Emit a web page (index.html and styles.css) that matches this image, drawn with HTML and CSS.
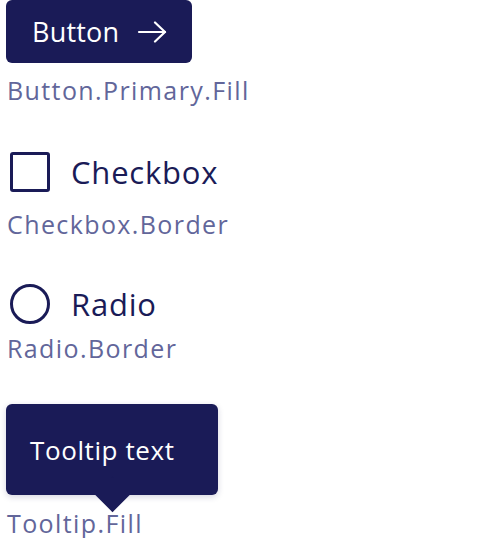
FILE: index.html
```html
<!DOCTYPE html>
<html lang="en">
<head>
  <meta charset="UTF-8">
  <meta name="viewport" content="width=device-width, initial-scale=1.0">
  <title>Tokens</title>
  <link rel="stylesheet" href="styles.css">
</head>
<body>
  <!-- primary button -->
  <div class="sample">
    <button class="btn">
      Button
      <svg class="btn-arrow" width="30" height="22" viewBox="0 0 30 22" fill="none" stroke="#fff" stroke-width="2.2" stroke-linecap="round" stroke-linejoin="round">
        <path d="M2 11H28"/>
        <path d="M18 1.5L28 11L18 20.5"/>
      </svg>
    </button>
    <div class="token">Button.Primary.Fill</div>
  </div>

  <!-- checkbox -->
  <div class="sample">
    <label class="choice">
      <span class="box"></span>
      Checkbox
    </label>
    <div class="token">Checkbox.Border</div>
  </div>

  <!-- radio -->
  <div class="sample">
    <label class="choice">
      <span class="box round"></span>
      Radio
    </label>
    <div class="token">Radio.Border</div>
  </div>

  <!-- tooltip -->
  <div class="sample">
    <div class="tooltip">Tooltip text</div>
    <div class="token">Tooltip.Fill</div>
  </div>
</body>
</html>
```

FILE: styles.css
```css
body {
  margin: 0;
  padding: 0 6px;
  font-family: 'Open Sans', 'Lato', sans-serif;
  background: #fff;
  color: #1a1b57;
}

.sample {
  display: flex;
  flex-direction: column;
  align-items: flex-start;
}

.token {
  font-size: 25px;
  letter-spacing: 1.4px;
  color: #62669a;
  padding-left: 1px;
  line-height: 30px;
}

/* 按钮 */
.btn {
  display: flex;
  align-items: center;
  gap: 18px;
  width: 186px;
  height: 63px;
  padding: 0 0 0 26px;
  background: #1a1b57;
  color: #fff;
  border: none;
  border-radius: 6px;
  font-family: inherit;
  font-size: 27px;
  letter-spacing: 0.2px;
  cursor: pointer;
}

.btn + .token {
  margin-top: 12px;
}

/* 选择框 */
.choice {
  display: flex;
  align-items: center;
  gap: 21px;
  height: 40px;
  line-height: 40px;
  font-size: 31px;
  letter-spacing: 0.8px;
  padding-left: 4px;
}

.sample:nth-child(2) .choice {
  margin-top: 47px;
}

.sample:nth-child(3) .choice {
  margin-top: 45px;
}

.box {
  width: 34px;
  height: 34px;
  border: 3px solid #1a1b57;
  border-radius: 3px;
}

.box.round {
  border-radius: 50%;
}

.sample:nth-child(2) .token {
  margin-top: 17px;
}

.sample:nth-child(3) .token {
  margin-top: 9px;
}

/* 提示框 */
.tooltip {
  position: relative;
  margin-top: 41px;
  width: 212px;
  height: 91px;
  box-sizing: border-box;
  padding: 0 24px;
  display: flex;
  align-items: center;
  background: #1a1b57;
  color: #fff;
  font-size: 26px;
  letter-spacing: 0.6px;
  border-radius: 6px;
  box-shadow: 0 2px 6px rgba(26, 27, 87, 0.18);
}

.tooltip::after {
  content: '';
  position: absolute;
  left: 94px;
  bottom: -12px;
  width: 25px;
  height: 25px;
  background: #1a1b57;
  transform: rotate(45deg);
}

.tooltip + .token {
  margin-top: 13px;
}
```
